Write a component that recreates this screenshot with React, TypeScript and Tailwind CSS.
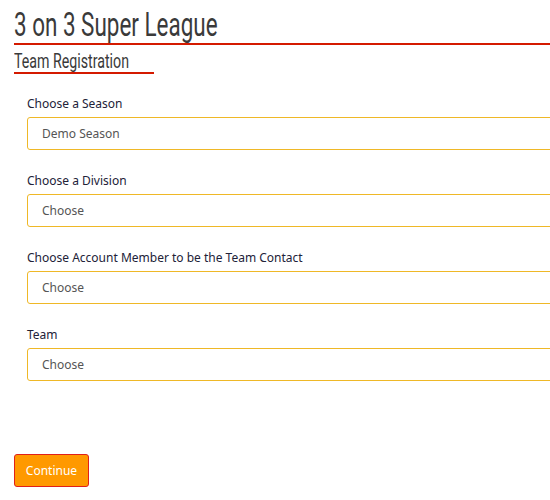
import React from "react";

const fields = [
  { label: "Choose a Season", value: "Demo Season" },
  { label: "Choose a Division", value: "Choose" },
  { label: "Choose Account Member to be the Team Contact", value: "Choose" },
  { label: "Team", value: "Choose" },
];

const App: React.FC = () => {
  return (
    <div className="w-[550px] h-[500px] overflow-hidden bg-white">
      <div className="pl-[14px] pt-[6px] font-['Roboto',sans-serif] text-[#3a3a3a]">
        <h1 className="text-[34px] leading-[37px] border-b-2 border-[#d41a00] w-[600px] whitespace-nowrap">
          <span className="inline-block origin-left scale-x-[0.66]">3 on 3 Super League</span>
        </h1>
        <h2 className="mt-[6px] text-[20px] leading-[21px] border-b-2 border-[#d41a00] w-[140px] whitespace-nowrap">
          <span className="inline-block origin-left scale-x-[0.71]">Team Registration</span>
        </h2>
      </div>
      <div className="pl-[27px] pt-[23px] flex flex-col gap-[24px] font-['Noto_Sans',sans-serif]">
        {fields.map((f) => (
          <div key={f.label}>
            <label className="block text-[12px] leading-[14px] text-[#222238] mb-[6px]">
              {f.label}
            </label>
            <div className="w-[560px] h-[33px] border border-[#efb827] rounded-[3px] flex items-center pl-[14px] text-[12px] text-[#555]">
              {f.value}
            </div>
          </div>
        ))}
      </div>
      <div className="pl-[14px] pt-[73px]">
        <button className="w-[75px] h-[33px] bg-[#ff9900] border border-[#e0201a] rounded-[3px] text-white text-[12px] font-['Noto_Sans',sans-serif]">
          Continue
        </button>
      </div>
    </div>
  );
};

export default App;
